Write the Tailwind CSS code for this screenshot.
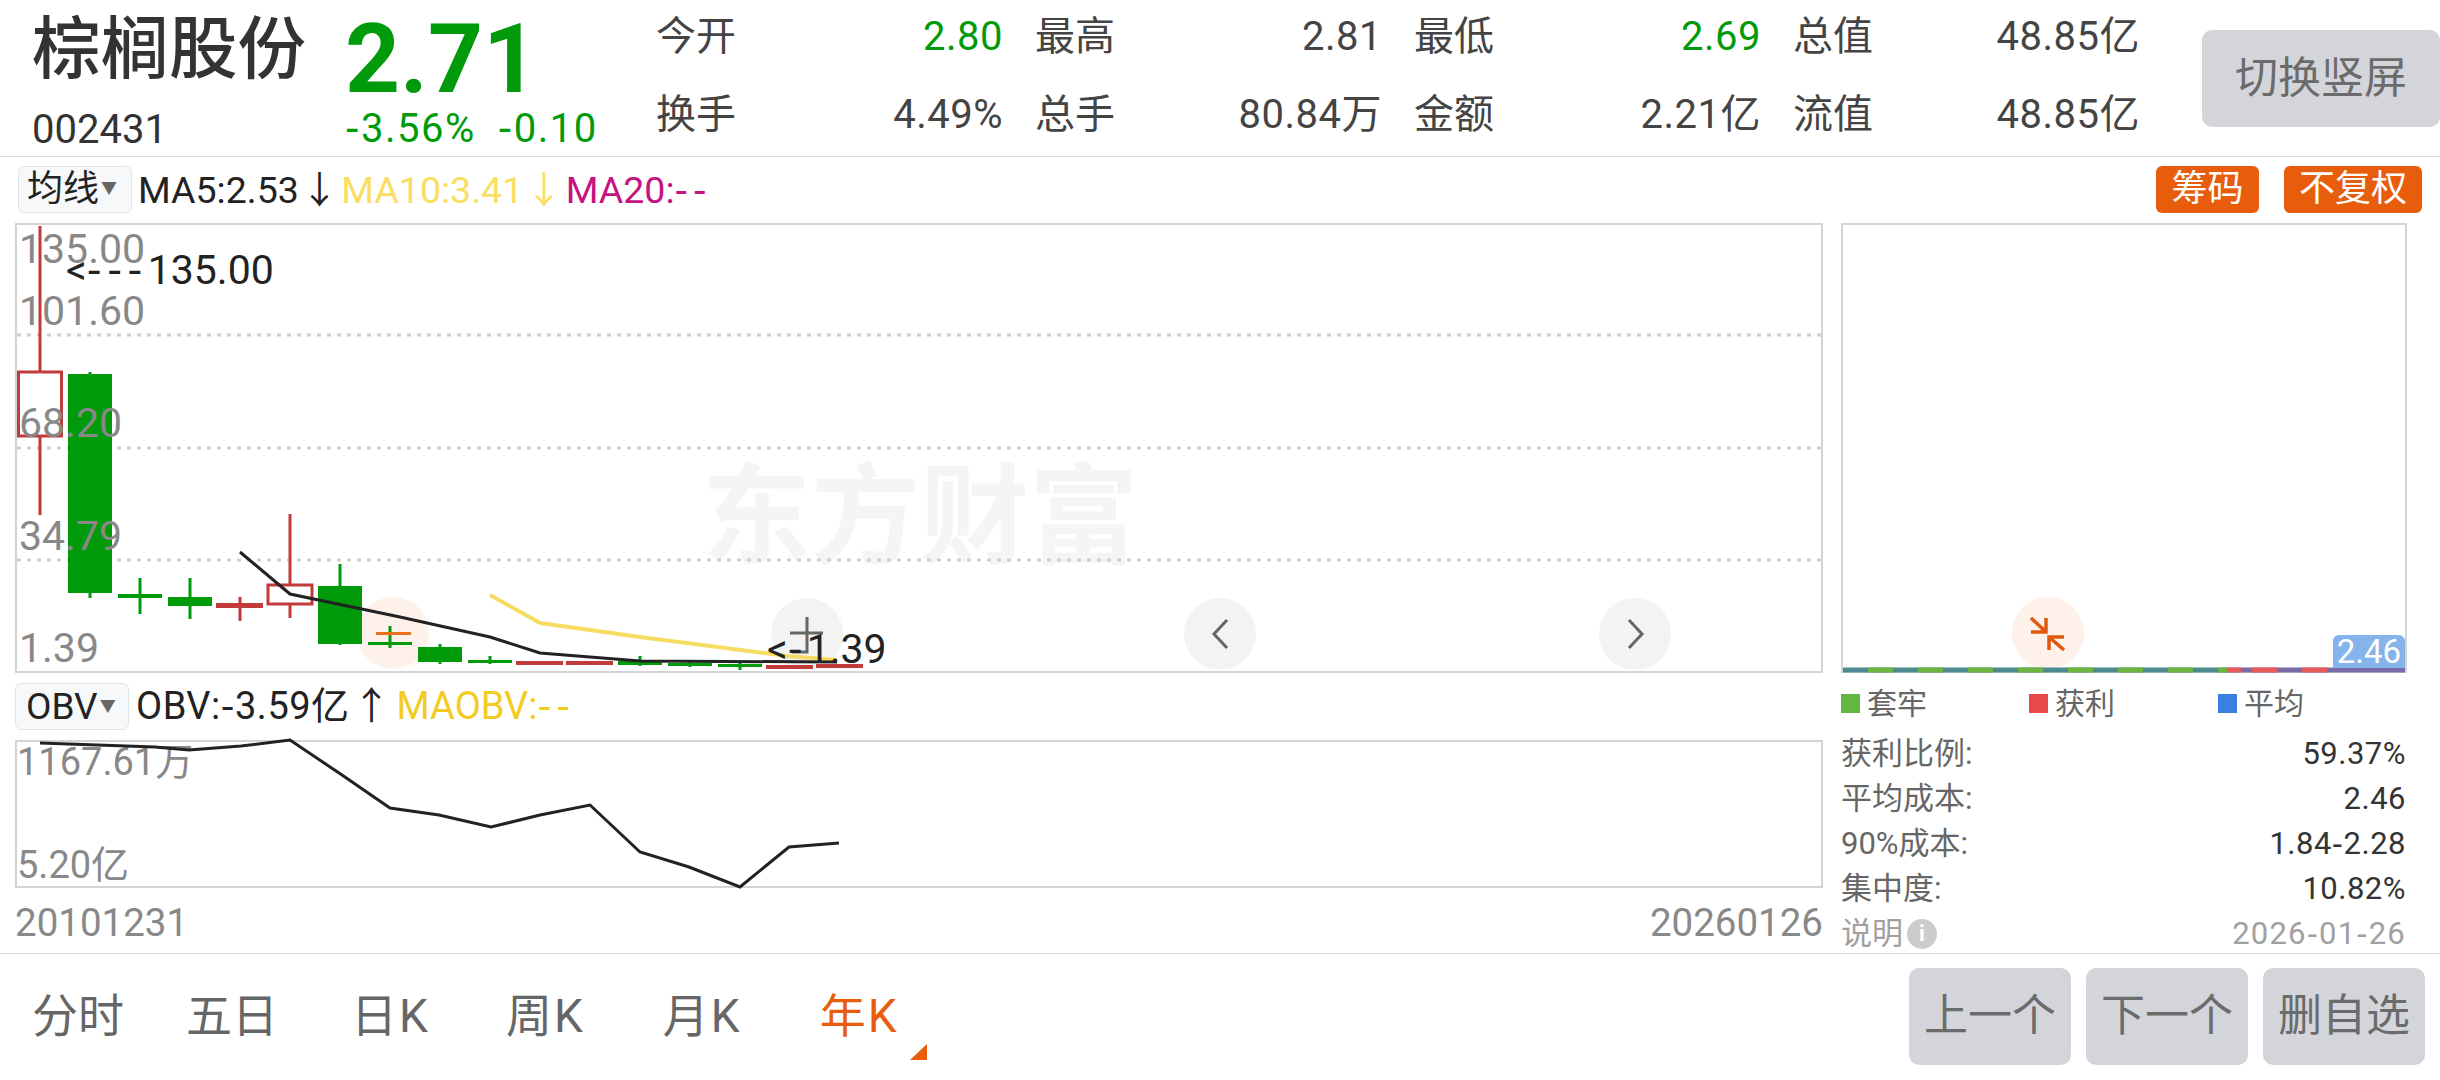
<!DOCTYPE html>
<html lang="zh-CN">
<head>
    <meta charset="UTF-8">
    <title>棕榈股份</title>
    <script src="https://cdn.jsdelivr.net/npm/@tailwindcss/browser@4"></script>
</head>
<body class="w-[2440px] h-[1080px] overflow-hidden bg-white font-['Roboto','Noto_Sans_CJK_SC',sans-serif] text-[#333]">
    <!-- Quote header -->
    <header class="flex h-[157px] border-b border-[#dcdcdc]">
        <div class="w-[345px] pl-[32px] pt-[8px]">
            <div class="text-[68.5px] leading-[84px] font-medium text-[#333]">棕榈股份</div>
            <div class="text-[40px] leading-[48px] mt-[14px]">002431</div>
        </div>
        <div class="w-[311px] text-[#009a0a]">
            <div class="text-[96px] leading-[92px] mt-[13px] font-bold">2.71</div>
            <div class="flex gap-[22px] text-[40px] leading-[46px] tracking-[1.5px]">
                <span><span class="font-['DejaVu_Sans']">-</span>3.56%</span><span><span class="font-['DejaVu_Sans']">-</span>0.10</span>
            </div>
        </div>
        <div class="grid grid-cols-[347px_347px_347px_347px] gap-x-[32px] grid-rows-[78px_78px] w-[1484px] h-[156px] mt-[-2px] text-[40px] text-[#444]">
            <div class="flex items-center justify-between"><span>今开</span><span class="text-[#009a0a] tracking-[0.5px]">2.80</span></div>
            <div class="flex items-center justify-between"><span>最高</span><span class="tracking-[0.5px]">2.81</span></div>
            <div class="flex items-center justify-between"><span>最低</span><span class="text-[#009a0a] tracking-[0.5px]">2.69</span></div>
            <div class="flex items-center justify-between"><span>总值</span><span class="tracking-[0.5px]">48.85亿</span></div>
            <div class="flex items-center justify-between"><span>换手</span><span class="tracking-[0.5px]">4.49%</span></div>
            <div class="flex items-center justify-between"><span>总手</span><span class="tracking-[0.5px]">80.84万</span></div>
            <div class="flex items-center justify-between"><span>金额</span><span class="tracking-[0.5px]">2.21亿</span></div>
            <div class="flex items-center justify-between"><span>流值</span><span class="tracking-[0.5px]">48.85亿</span></div>
        </div>
        <button class="ml-auto mt-[30px] w-[238px] h-[97px] rounded-[10px] bg-[#d4d5da] text-[#6b6b6b] text-[43px]">切换竖屏</button>
    </header>

    <div class="flex h-[797px] border-b border-[#dcdcdc]">
        <!-- Left column: K-line + OBV -->
        <div class="w-[1841px] pl-[15px]">
            <div class="flex items-center h-[66px] text-[37.5px] text-[#222]">
                <div class="flex items-center w-[114px] h-[47px] ml-[3px] mt-[-2px] pl-[8px] rounded-[6px] border border-[#e3e4e8] bg-[#f7f8fa]">
                    <span class="text-[36px]">均线</span><span class="ml-[2px] text-[16px] text-[#666]">▼</span>
                </div>
                <span class="ml-[6px]">MA5:2.53</span><span class="ml-[2px]">↓</span>
                <span class="ml-[3px] text-[#f9de62]">MA10:3.41</span><span class="ml-[2px] text-[#f9de62]">↓</span>
                <span class="ml-[3px] text-[#c5137f]">MA20:<span class="font-['DejaVu_Sans'] tracking-[5px]">--</span></span>
            </div>

            <div class="relative w-[1808px] h-[450px] border-2 border-[#d4d4d4]">
                <svg class="absolute left-[-2px] top-[-2px] overflow-visible" width="1808" height="450" viewBox="15 223 1808 450">
                    <text x="702" y="555" font-size="109" font-weight="700" fill="#f5f5f5">东方财富</text>
                    <g stroke="#cfcfcf" stroke-width="3" stroke-dasharray="4 6">
                        <line x1="17" y1="335" x2="1821" y2="335"/>
                        <line x1="17" y1="448" x2="1821" y2="448"/>
                        <line x1="17" y1="560" x2="1821" y2="560"/>
                    </g>
                    <circle cx="393" cy="633" r="36" fill="#fdf1ea"/>
                    <circle cx="807" cy="634" r="36" fill="#f3f3f3"/>
                    <circle cx="1220" cy="634" r="36" fill="#f3f3f3"/>
                    <circle cx="1635" cy="634" r="36" fill="#f3f3f3"/>
                    <path d="M1227 620 L1214 634 L1227 648" fill="none" stroke="#666" stroke-width="3"/>
                    <path d="M1629 620 L1642 634 L1629 648" fill="none" stroke="#666" stroke-width="3"/>

                    <!-- candles -->
                    <g stroke="#c23b3b" stroke-width="3" fill="none">
                        <path d="M40 226V372M40 436V515"/>
                        <rect x="18.5" y="372" width="43" height="64"/>
                        <path d="M240 597V621M290 514V585M290 604V618"/>
                        <rect x="268" y="585" width="44" height="19"/>
                    </g>
                    <g fill="#c23b3b">
                        <rect x="216" y="603" width="47" height="5"/>
                        <rect x="516" y="661" width="47" height="4"/>
                        <rect x="566" y="661" width="47" height="4"/>
                        <rect x="766" y="665" width="47" height="4"/>
                        <rect x="816" y="664" width="47" height="4"/>
                    </g>
                    <g stroke="#009a0a" stroke-width="3" fill="none">
                        <path d="M90 372V598M140 578V614M190 578V619M340 564V645M390 626V648M440 644V664M490 656V664M640 656V666M690 660V667M740 662V670"/>
                    </g>
                    <g fill="#009a0a">
                        <rect x="68" y="374" width="44" height="219"/>
                        <rect x="118" y="594" width="44" height="4"/>
                        <rect x="168" y="597" width="44" height="9"/>
                        <rect x="318" y="586" width="44" height="58"/>
                        <rect x="368" y="642" width="44" height="3"/>
                        <rect x="418" y="647" width="44" height="15"/>
                        <rect x="468" y="660" width="44" height="3"/>
                        <rect x="618" y="661" width="44" height="4"/>
                        <rect x="668" y="663" width="44" height="3"/>
                        <rect x="718" y="664" width="44" height="3"/>
                    </g>
                    <rect x="376" y="632" width="35" height="3" fill="#e8711c"/>

                    <polyline points="490,595 540,623 640,637 787,656 837,660" fill="none" stroke="#f7dc62" stroke-width="4"/>
                    <polyline points="240,552 290,594 400,617 490,637 540,653 640,661 837,662" fill="none" stroke="#222" stroke-width="3"/>

                    <g fill="#888" font-size="41">
                        <text x="19" y="263">135.00</text>
                        <text x="19" y="325">101.60</text>
                        <text x="19" y="437">68.20</text>
                        <text x="19" y="550">34.79</text>
                        <text x="19" y="662">1.39</text>
                    </g>
                    <path d="M790 633H823M807 617V652H792" fill="none" stroke="#666" stroke-width="3"/>
                    <g fill="#222" font-size="41">
                        <text x="66" y="284">&lt;<tspan font-family="DejaVu Sans" letter-spacing="5.5">---</tspan>135.00</text>
                        <text x="767" y="663">&lt;<tspan font-family="DejaVu Sans" letter-spacing="4">-</tspan>1.39</text>
                    </g>
                </svg>
            </div>

            <div class="flex items-center h-[67px] text-[38px] text-[#222]">
                <div class="flex items-center w-[114px] h-[47px] pl-[10px] rounded-[6px] border border-[#e3e4e8] bg-[#f7f8fa]">
                    <span class="text-[37px]">OBV</span><span class="ml-[2px] text-[16px] text-[#666]">▼</span>
                </div>
                <span class="ml-[7px] tracking-[0.5px]">OBV:<span class="font-['DejaVu_Sans']">-</span>3.59亿</span><span class="ml-[3px]">↑</span>
                <span class="ml-[6px] text-[#f2cc1f]">MAOBV:<span class="font-['DejaVu_Sans'] tracking-[5px]">--</span></span>
            </div>

            <div class="relative w-[1808px] h-[148px] border-2 border-[#d4d4d4]">
                <svg class="absolute left-[-2px] top-[-2px] overflow-visible" width="1808" height="148" viewBox="15 740 1808 148">
                    <g fill="#888" font-size="38">
                        <text x="17" y="775">1167.61万</text>
                        <text x="17" y="878">5.20亿</text>
                    </g>
                    <polyline points="40,743 155,747 189,750 241,746 290,740 342,775 390,808 439,815 491,827 540,815 590,805 640,852 689,867 740,887 789,847 839,843" fill="none" stroke="#222" stroke-width="3"/>
                </svg>
            </div>

            <div class="flex justify-between w-[1808px] mt-[13px] text-[38.5px] leading-[44px] text-[#888]">
                <span>20101231</span><span>20260126</span>
            </div>
        </div>

        <!-- Right column: chip distribution -->
        <div class="w-[599px]">
            <div class="flex items-center justify-end gap-[25px] h-[66px] pr-[18px] text-[36px] text-[#fff]">
                <div class="flex items-center justify-center w-[103px] h-[47px] mt-[-2px] rounded-[6px] bg-[#e85d0c]">筹码</div>
                <div class="flex items-center justify-center w-[138px] h-[47px] mt-[-2px] rounded-[6px] bg-[#e85d0c]">不复权</div>
            </div>
            <div class="relative w-[566px] h-[450px] border-2 border-[#d4d4d4]">
                <svg class="absolute left-[-2px] top-[-2px] overflow-visible" width="566" height="450" viewBox="1841 223 566 450">
                    <circle cx="2048" cy="633" r="36" fill="#fdf1ea"/>
                    <path d="M2031 618L2046 632M2046 618V632H2031M2064 650L2049 637M2049 650V637H2064" fill="none" stroke="#e0590f" stroke-width="3.5"/>
                    <line x1="1843" y1="670" x2="2227" y2="670" stroke="#4d8a8f" stroke-width="5"/>
                    <line x1="1843" y1="670" x2="2227" y2="670" stroke="#6db33f" stroke-width="5" stroke-dasharray="25 25" stroke-dashoffset="-25"/>
                    <line x1="2227" y1="670" x2="2405" y2="670" stroke="#7a6aa8" stroke-width="5"/>
                    <line x1="2227" y1="670" x2="2332" y2="670" stroke="#e85a5a" stroke-width="5" stroke-dasharray="14 11 25 25 25 25"/>
                </svg>
                <div class="absolute right-[0px] bottom-[3px] flex items-center justify-center w-[72px] h-[33px] rounded-t-[6px] bg-[#85b4ec] text-white text-[33px]">2.46</div>
            </div>
            <div class="flex items-center h-[61px] text-[30px] text-[#666]">
                <div class="flex items-center w-[188px]"><span class="w-[19px] h-[19px] bg-[#62b743]"></span><span class="ml-[7px]">套牢</span></div>
                <div class="flex items-center w-[189px]"><span class="w-[19px] h-[19px] bg-[#e84a4a]"></span><span class="ml-[7px]">获利</span></div>
                <div class="flex items-center"><span class="w-[19px] h-[19px] bg-[#3a80e2]"></span><span class="ml-[7px]">平均</span></div>
            </div>
            <div class="w-[565px] mt-[-3px] text-[31px] leading-[45px] text-[#666]">
                <div class="flex justify-between"><span>获利比例:</span><span class="text-[#333] tracking-[0.5px]">59.37%</span></div>
                <div class="flex justify-between"><span>平均成本:</span><span class="text-[#333] tracking-[0.5px]">2.46</span></div>
                <div class="flex justify-between"><span>90%成本:</span><span class="text-[#333] tracking-[0.5px]">1.84<span class="font-['DejaVu_Sans']">-</span>2.28</span></div>
                <div class="flex justify-between"><span>集中度:</span><span class="text-[#333] tracking-[0.5px]">10.82%</span></div>
                <div class="flex justify-between text-[#a0a0a0]">
                    <span class="flex items-center">说明<span class="flex items-center justify-center ml-[4px] w-[30px] h-[30px] rounded-full bg-[#cccccc] text-white text-[22px] font-bold">i</span></span>
                    <span class="tracking-[1.2px]">2026<span class="font-['DejaVu_Sans']">-</span>01<span class="font-['DejaVu_Sans']">-</span>26</span>
                </div>
            </div>
        </div>
    </div>

    <!-- Period tabs and actions -->
    <footer class="relative flex items-center h-[125px] text-[46px] text-[#666]">
        <div class="flex">
            <span class="ml-[32px]">分时</span>
            <span class="ml-[62px]">五日</span>
            <span class="ml-[73px] tracking-[2px]">日K</span>
            <span class="ml-[76px] tracking-[2px]">周K</span>
            <span class="ml-[78px] tracking-[2px]">月K</span>
            <span class="ml-[78px] tracking-[2px] text-[#e85d0c]">年K</span>
        </div>
        <span class="absolute left-[910px] top-[90px] w-[17px] h-[16px] bg-[#e85d0c] [clip-path:polygon(100%_0,100%_100%,0_100%)]"></span>
        <div class="flex gap-[15px] ml-auto mr-[15px] mt-[-1px] text-[44px] text-[#6b6b6b]">
            <button class="w-[162px] h-[97px] rounded-[10px] bg-[#d4d5da]">上一个</button>
            <button class="w-[162px] h-[97px] rounded-[10px] bg-[#d4d5da]">下一个</button>
            <button class="w-[162px] h-[97px] rounded-[10px] bg-[#d4d5da]">删自选</button>
        </div>
    </footer>
</body>
</html>
